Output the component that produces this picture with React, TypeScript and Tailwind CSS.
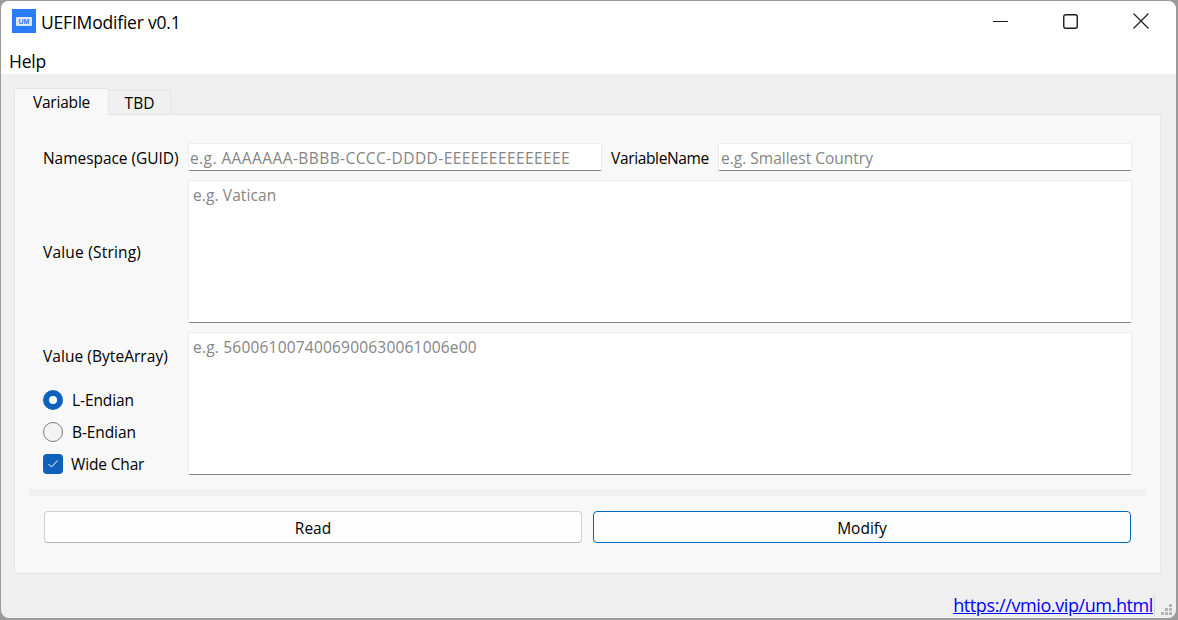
import React from 'react';

const font = 'font-["Open_Sans","Noto_Sans",sans-serif]';

const inputClass =
  'h-[28px] bg-white border border-[#ececec] border-b-[#868686] rounded-[2px] pl-[1px] pr-[1px] pt-[2px] text-[15.5px] text-black placeholder:text-[#858585] outline-none';

const textareaClass =
  'block w-full h-full resize-none bg-white border border-[#ececec] border-b-[#868686] rounded-[2px] pl-[4px] pt-[3px] text-[15.5px] text-black placeholder:text-[#858585] outline-none';

const Label = ({ children, className = '' }: { children: React.ReactNode; className?: string }) => (
  <span className={`text-[15.5px] leading-[20px] text-black whitespace-nowrap ${className}`}>{children}</span>
);

function Logo() {
  return (
    <div className="w-[24px] h-[24px] bg-[#2a7bf6] flex items-center justify-center">
      <div className="w-[16px] h-[9px] rounded-[1px] bg-[#dce9fd] flex items-center justify-center text-[7px] leading-none font-bold text-[#2a7bf6] font-['Liberation_Sans',sans-serif]">
        UM
      </div>
    </div>
  );
}

function WindowButtons() {
  return (
    <div className="flex items-center pr-[27px] gap-[55px]">
      <svg width="15" height="15" viewBox="0 0 15 15">
        <path d="M0 7.5h15" stroke="#1a1a1a" strokeWidth="1" />
      </svg>
      <svg width="15" height="15" viewBox="0 0 15 15">
        <rect x="0.75" y="0.75" width="13.5" height="13.5" rx="2" fill="none" stroke="#1a1a1a" strokeWidth="1.4" />
      </svg>
      <svg width="16" height="16" viewBox="0 0 16 16">
        <path d="M0.5 0.5l15 15M15.5 0.5l-15 15" stroke="#1a1a1a" strokeWidth="1.2" />
      </svg>
    </div>
  );
}

function Radio({ checked, label }: { checked?: boolean; label: string }) {
  return (
    <div className="flex items-center h-[20px] gap-[9px]">
      {checked ? (
        <div className="w-[20px] h-[20px] rounded-full bg-[#0e62bd] flex items-center justify-center">
          <div className="w-[8px] h-[8px] rounded-full bg-white" />
        </div>
      ) : (
        <div className="w-[20px] h-[20px] rounded-full bg-[#f3f3f3] border border-[#7d7d7d]" />
      )}
      <Label className="tracking-[-0.1px]">{label}</Label>
    </div>
  );
}

function Checkbox({ label }: { label: string }) {
  return (
    <div className="flex items-center h-[20px] gap-[8px]">
      <div className="w-[20px] h-[20px] rounded-[4px] bg-[#0e62bd] flex items-center justify-center">
        <svg width="12" height="10" viewBox="0 0 12 10">
          <path d="M1.5 5l3 3 6-6.5" fill="none" stroke="#fff" strokeWidth="1" />
        </svg>
      </div>
      <Label className="tracking-[-0.15px]">{label}</Label>
    </div>
  );
}

export default function App() {
  return (
    <div className={`w-[1178px] h-[620px] bg-[#9a9a9a] pl-[1px] pr-[2px] pt-[1px] pb-[2px] overflow-hidden ${font}`}>
      <div className="w-full h-full rounded-[8px] overflow-hidden bg-[#efefef] flex flex-col">
        {/* title bar */}
        <div className="h-[41px] bg-white flex items-center justify-between shrink-0 pb-[1px]">
          <div className="flex items-center pl-[11px] gap-[5px]">
            <Logo />
            <span className="text-[17.5px] text-black tracking-[-0.2px] pt-[3px]">UEFIModifier v0.1</span>
          </div>
          <WindowButtons />
        </div>

        {/* menu bar */}
        <div className="h-[32px] bg-white flex items-center pl-[8px] pt-[6px] shrink-0">
          <span className="text-[17.5px] text-black tracking-[-0.2px]">Help</span>
        </div>

        {/* tabs + panel */}
        <div className="pl-[13px] pr-[15px] pt-[14px] flex flex-col">
          <div className="flex items-end h-[27px] relative z-10 -mb-[1px]">
            <div className="w-[95px] h-[27px] bg-[#f8f8f8] border border-[#e5e5e5] border-b-0 flex items-center justify-center">
              <Label className="tracking-[-0.2px]">Variable</Label>
            </div>
            <div className="w-[62px] h-[25px] bg-[#f0f0f0] border border-[#e5e5e5] border-l-0 flex items-center justify-center">
              <Label>TBD</Label>
            </div>
          </div>

          <div className="h-[460px] bg-[#f8f8f8] border border-[#e5e5e5] px-[14px] pt-[28px] flex flex-col">
            <div className="px-[14px] flex flex-col">
              <div className="flex items-center h-[28px]">
                <Label className="w-[145px] shrink-0 pt-[1px] tracking-[-0.05px]">Namespace (GUID)</Label>
                <input className={`${inputClass} w-[414px] shrink-0 tracking-[0.42px]`} placeholder="e.g. AAAAAAA-BBBB-CCCC-DDDD-EEEEEEEEEEEEEE" />
                <Label className="ml-[9px] w-[107px] shrink-0 pt-[1px] tracking-[-0.35px]">VariableName</Label>
                <input className={`${inputClass} flex-1 min-w-0 pl-[2px]`} placeholder="e.g. Smallest Country" />
              </div>

              <div className="flex items-center h-[143px] mt-[9px]">
                <Label className="w-[145px] shrink-0 tracking-[0.2px]">Value (String)</Label>
                <div className="flex-1 h-full">
                  <textarea className={`${textareaClass} tracking-[0.1px]`} placeholder="e.g. Vatican" />
                </div>
              </div>

              <div className="flex h-[143px] mt-[9px]">
                <div className="w-[145px] shrink-0 flex flex-col pt-[14px]">
                  <Label className="tracking-[0.05px]">Value (ByteArray)</Label>
                  <div className="flex flex-col gap-[12px] mt-[24px]">
                    <Radio checked label="L-Endian" />
                    <Radio label="B-Endian" />
                    <Checkbox label="Wide Char" />
                  </div>
                </div>
                <div className="flex-1 h-full">
                  <textarea className={`${textareaClass} tracking-[0.2px]`} placeholder="e.g. 5600610074006900630061006e00" />
                </div>
              </div>
            </div>

            <div className="h-[7px] bg-[#f0f0f0] mt-[14px] shrink-0" />

            <div className="flex gap-[11px] mt-[15px] px-[15px]">
              <button className="flex-1 h-[32px] pt-[1px] rounded-[4px] bg-[#fdfdfd] border border-[#d0d0d0] border-b-[#b5b5b5]">
                <Label>Read</Label>
              </button>
              <button className="flex-1 h-[32px] pt-[1px] rounded-[4px] bg-[#fdfdfd] border border-[#0067c0]">
                <Label>Modify</Label>
              </button>
            </div>
          </div>
        </div>

        {/* status bar */}
        <div className="flex-1 flex items-end justify-end relative">
          <a href="#" className="text-[18px] leading-[22px] text-[#0000ff] underline mr-[21px] mb-[2px] tracking-[-0.4px] border-r border-[#d8d8d8] pr-[1px]">
            https://vmio.vip/um.html
          </a>
          <svg width="12" height="12" viewBox="0 0 12 12" className="absolute right-[3px] bottom-[2px]" fill="#b5b5b5">
            <rect x="8" y="0" width="3" height="3" />
            <rect x="4" y="4" width="3" height="3" />
            <rect x="8" y="4" width="3" height="3" />
            <rect x="0" y="8" width="3" height="3" />
            <rect x="4" y="8" width="3" height="3" />
            <rect x="8" y="8" width="3" height="3" />
          </svg>
        </div>
      </div>
    </div>
  );
}
